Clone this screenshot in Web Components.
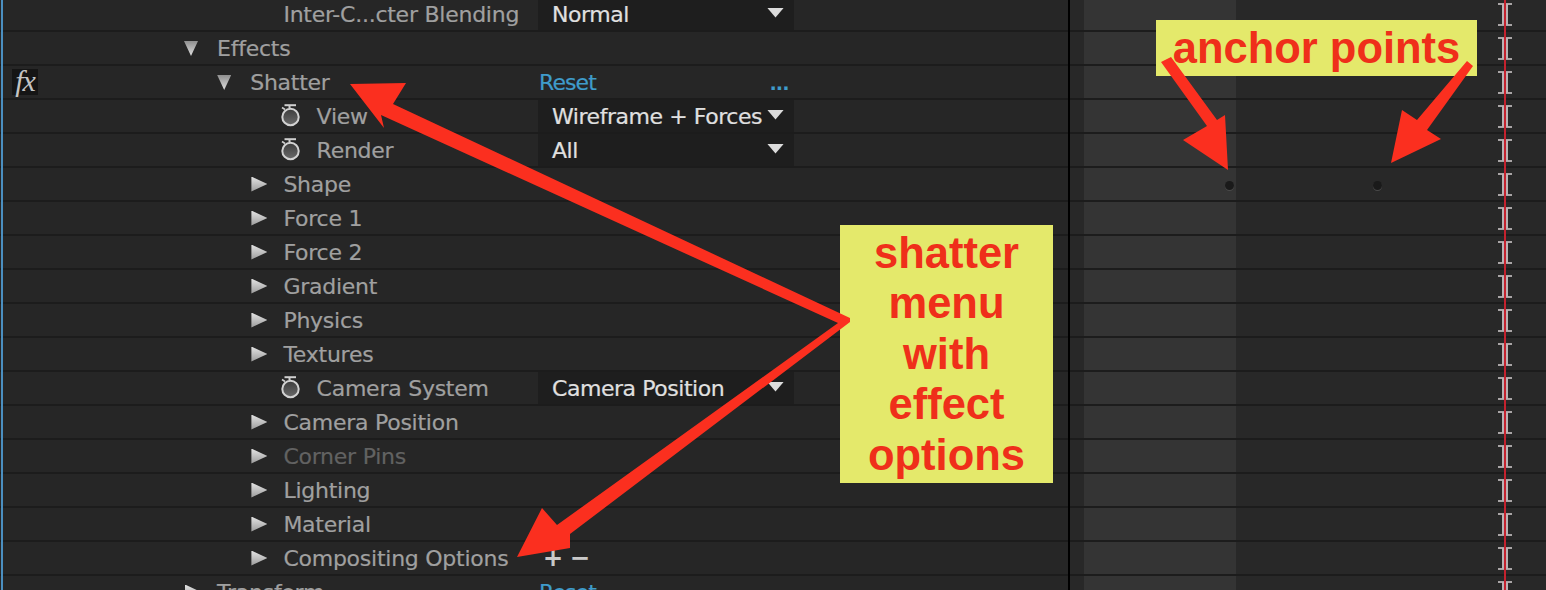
<!DOCTYPE html>
<html>
<head>
<meta charset="utf-8">
<style>
  html, body { margin: 0; height: 100%; overflow: hidden; background: #262626; }
</style>
</head>
<body>
<comp-panel>
  <tl-row level="2" first label="Inter-C...cter Blending" value="Normal"></tl-row>
  <tl-row level="0" twirl="down" label="Effects"></tl-row>
  <tl-row level="1" twirl="down" fx label="Shatter" reset dots></tl-row>
  <tl-row level="3" watch label="View" value="Wireframe + Forces"></tl-row>
  <tl-row level="3" watch label="Render" value="All"></tl-row>
  <tl-row level="2" twirl="right" label="Shape" anchors></tl-row>
  <tl-row level="2" twirl="right" label="Force 1"></tl-row>
  <tl-row level="2" twirl="right" label="Force 2"></tl-row>
  <tl-row level="2" twirl="right" label="Gradient"></tl-row>
  <tl-row level="2" twirl="right" label="Physics"></tl-row>
  <tl-row level="2" twirl="right" label="Textures"></tl-row>
  <tl-row level="3" watch label="Camera System" value="Camera Position"></tl-row>
  <tl-row level="2" twirl="right" label="Camera Position"></tl-row>
  <tl-row level="2" twirl="right" label="Corner Pins" disabled></tl-row>
  <tl-row level="2" twirl="right" label="Lighting"></tl-row>
  <tl-row level="2" twirl="right" label="Material"></tl-row>
  <tl-row level="2" twirl="right" label="Compositing Options" plusminus></tl-row>
  <tl-row level="0" twirl="right" label="Transform" reset></tl-row>
  <call-out slot="over" style="left:1156px;top:20px;width:321px;height:56px">anchor points</call-out>
  <call-out slot="over" style="left:840px;top:225px;width:213px;height:258px">shatter<br>menu<br>with<br>effect<br>options</call-out>
  <red-arrows slot="over"></red-arrows>
</comp-panel>

<script>
class CompPanel extends HTMLElement {
  constructor() {
    super();
    this.attachShadow({ mode: 'open' });
    this.shadowRoot.innerHTML = `
      <style>
        :host {
          display: block;
          position: relative;
          width: 1546px;
          height: 590px;
          overflow: hidden;
          background: #262626;
        }
        .filas { margin-top: -2px; }
        .azul { position: absolute; left: 1px; top: 0; bottom: 0; width: 2px; background: #4b8fc0; }
        .cti { position: absolute; left: 1504px; top: 0; bottom: 0; width: 2px; background: #c4222e; }
      </style>
      <div class="filas"><slot></slot></div>
      <div class="azul"></div>
      <div class="cti"></div>
      <slot name="over"></slot>
    `;
  }
}

class TlRow extends HTMLElement {
  constructor() {
    super();
    this.attachShadow({ mode: 'open' });
  }

  connectedCallback() {
    const label = this.getAttribute('label') || '';
    const value = this.getAttribute('value');
    const level = Number(this.getAttribute('level') || 0);
    const twirl = this.getAttribute('twirl');

    let icono = '';
    if (twirl) icono = `<span class="twirl ${twirl}"></span>`;
    if (this.hasAttribute('watch')) {
      icono = `<svg class="watch" width="22" height="26" viewBox="0 0 22 26">
        <defs><linearGradient id="g" x1="0" y1="0" x2="0" y2="1"><stop offset="0" stop-color="#3c3c3c"/><stop offset="1" stop-color="#6a6a6a"/></linearGradient></defs>
        <path d="M4.5 2.2H16" stroke="#cfcfcf" stroke-width="2" fill="none"/>
        <path d="M2 4.5L5 6.5" stroke="#cfcfcf" stroke-width="1.6" fill="none"/>
        <path d="M9.5 2.5V5" stroke="#cfcfcf" stroke-width="2" fill="none"/>
        <circle cx="10.5" cy="14" r="8.2" fill="url(#g)" stroke="#d2d2d2" stroke-width="2"/>
      </svg>`;
    }

    let medio = '';
    if (value) {
      medio = `<div class="cell select"><span>${value}</span><i></i></div>`;
    } else if (this.hasAttribute('reset')) {
      medio = `<div class="cell reset"><span>Reset</span>${this.hasAttribute('dots') ? '<b>...</b>' : ''}</div>`;
    } else if (this.hasAttribute('plusminus')) {
      medio = `<div class="cell pm"><span>+</span><span>−</span></div>`;
    } else {
      medio = `<div class="cell"></div>`;
    }

    let puntos = '';
    if (this.hasAttribute('anchors')) {
      puntos = `<em class="dot" style="left:155px"></em><em class="dot" style="left:303px"></em>`;
    }

    this.shadowRoot.innerHTML = `
      <style>
        :host {
          display: grid;
          grid-template-columns: 538px 256px 274px 2px 1fr;
          height: 34px;
          font: 22px "DejaVu Sans", sans-serif;
          letter-spacing: -0.25px;
          -webkit-text-stroke: 0.2px;
          color: #a0a0a0;
        }
        :host([disabled]) { color: #626262; }
        .cell {
          box-sizing: border-box;
          border-bottom: 2px solid #1c1c1c;
          display: flex;
          align-items: center;
          min-width: 0;
          white-space: nowrap;
        }
        .nombre { padding-left: calc(184px + var(--level) * 33.2px); }
        .hueco { width: 33px; flex: none; display: flex; align-items: center; }
        .twirl { display: block; background: linear-gradient(#8f8f8f, #dedede); }
        .twirl.right {
          width: 16px; height: 15px;
          margin-left: 1px;
          background: linear-gradient(#e2e2e2, #9a9a9a);
          clip-path: polygon(0 0, 100% 50%, 0 100%);
        }
        .twirl.down {
          width: 14px; height: 15px;
          margin-top: 1px;
          clip-path: polygon(0 0, 100% 0, 50% 100%);
        }
        .watch { margin-left: -4px; margin-top: -1px; }
        .select { background: #1e1e1e; color: #e0e0e0; padding: 0 10px 0 14px; justify-content: space-between; letter-spacing: -0.45px; }
        .select i { width: 17px; height: 10px; background: #dcdcdc; clip-path: polygon(0 0, 100% 0, 50% 100%); margin-top: -3px; }
        .reset { color: #3f9ccb; justify-content: space-between; padding: 0 5px 0 1px; letter-spacing: -0.9px; }
        .reset b { font-weight: 700; letter-spacing: -0.4px; font-size: 18px; margin-top: 3px; }
        .pm { color: #c9c9c9; font-weight: 700; font-size: 24px; gap: 7px; padding-left: 5px; }
        .negra { background: #000; }
        .tiempo { position: relative; display: flex; }
        .tiempo span { flex: none; border-bottom: 2px solid #1c1c1c; box-sizing: border-box; }
        .a { width: 14px; background: #282828; }
        .b { width: 152px; background: #343434; }
        .c { flex: 1 !important; background: #282828; }
        .ibeam { position: absolute; left: 428px; top: 5px; }
        .dot {
          position: absolute; top: 13px;
          width: 9px; height: 9px; border-radius: 50%;
          background: #1a1a1a;
          box-shadow: 0 1px 0 #4a4a4a;
        }
      </style>
      <div class="cell nombre" style="--level:${level}">
        ${this.hasAttribute('fx') ? '<fx-badge></fx-badge>' : ''}
        <div class="hueco">${icono}</div><span>${label}</span>
      </div>
      ${medio}
      <div class="cell"></div>
      <div class="negra"></div>
      <div class="tiempo">
        <span class="a"></span><span class="b"></span><span class="c"></span>
        ${puntos}
        <svg class="ibeam" width="14" height="23" viewBox="0 0 14 23">
          <path d="M0 1H14M0 22H14" stroke="#a9a5a6" stroke-width="2"/>
          <path d="M5 1V22M9 1V22" stroke="#b9b2b4" stroke-width="2"/>
        </svg>
      </div>
    `;
  }
}

class FxBadge extends HTMLElement {
  constructor() {
    super();
    this.attachShadow({ mode: 'open' });
    this.shadowRoot.innerHTML = `
      <style>
        :host {
          position: absolute;
          left: 12px;
          width: 26px;
          height: 26px;
          background: #151515;
          color: #c4c4c4;
          font: italic 30px/24px "Liberation Serif", serif;
          letter-spacing: -1px;
          -webkit-text-stroke: 0;
          text-align: center;
        }
      </style>fx`;
  }
}

class CallOut extends HTMLElement {
  constructor() {
    super();
    this.attachShadow({ mode: 'open' });
    this.shadowRoot.innerHTML = `
      <style>
        :host {
          position: absolute;
          display: flex;
          align-items: center;
          justify-content: center;
          text-align: center;
          background: #e4e96b;
          color: #ef2f1a;
          font: 700 43.5px/50.5px "Liberation Sans", sans-serif;
        }
      </style>
      <div><slot></slot></div>`;
  }
}

class RedArrows extends HTMLElement {
  constructor() {
    super();
    this.attachShadow({ mode: 'open' });
    this.shadowRoot.innerHTML = `
      <style>
        :host { position: absolute; inset: 0; pointer-events: none; }
        svg { display: block; }
        polygon { fill: #fb2f1f; }
      </style>
      <svg width="1546" height="590" viewBox="0 0 1546 590">
        <polygon points="350,84 406,83 393,104 850,318 850,322 570,534 570,548 517,557 542,508 557,525 838,323 381,115 384,128"/>
        <polygon points="1161,62 1171,57 1217,120 1225,115 1228,170 1183,140 1207,126"/>
        <polygon points="1467,61 1473,66 1427,130 1441,139 1391,163 1402,110 1417,120"/>
      </svg>`;
  }
}

customElements.define('comp-panel', CompPanel);
customElements.define('tl-row', TlRow);
customElements.define('fx-badge', FxBadge);
customElements.define('call-out', CallOut);
customElements.define('red-arrows', RedArrows);
</script>
</body>
</html>
